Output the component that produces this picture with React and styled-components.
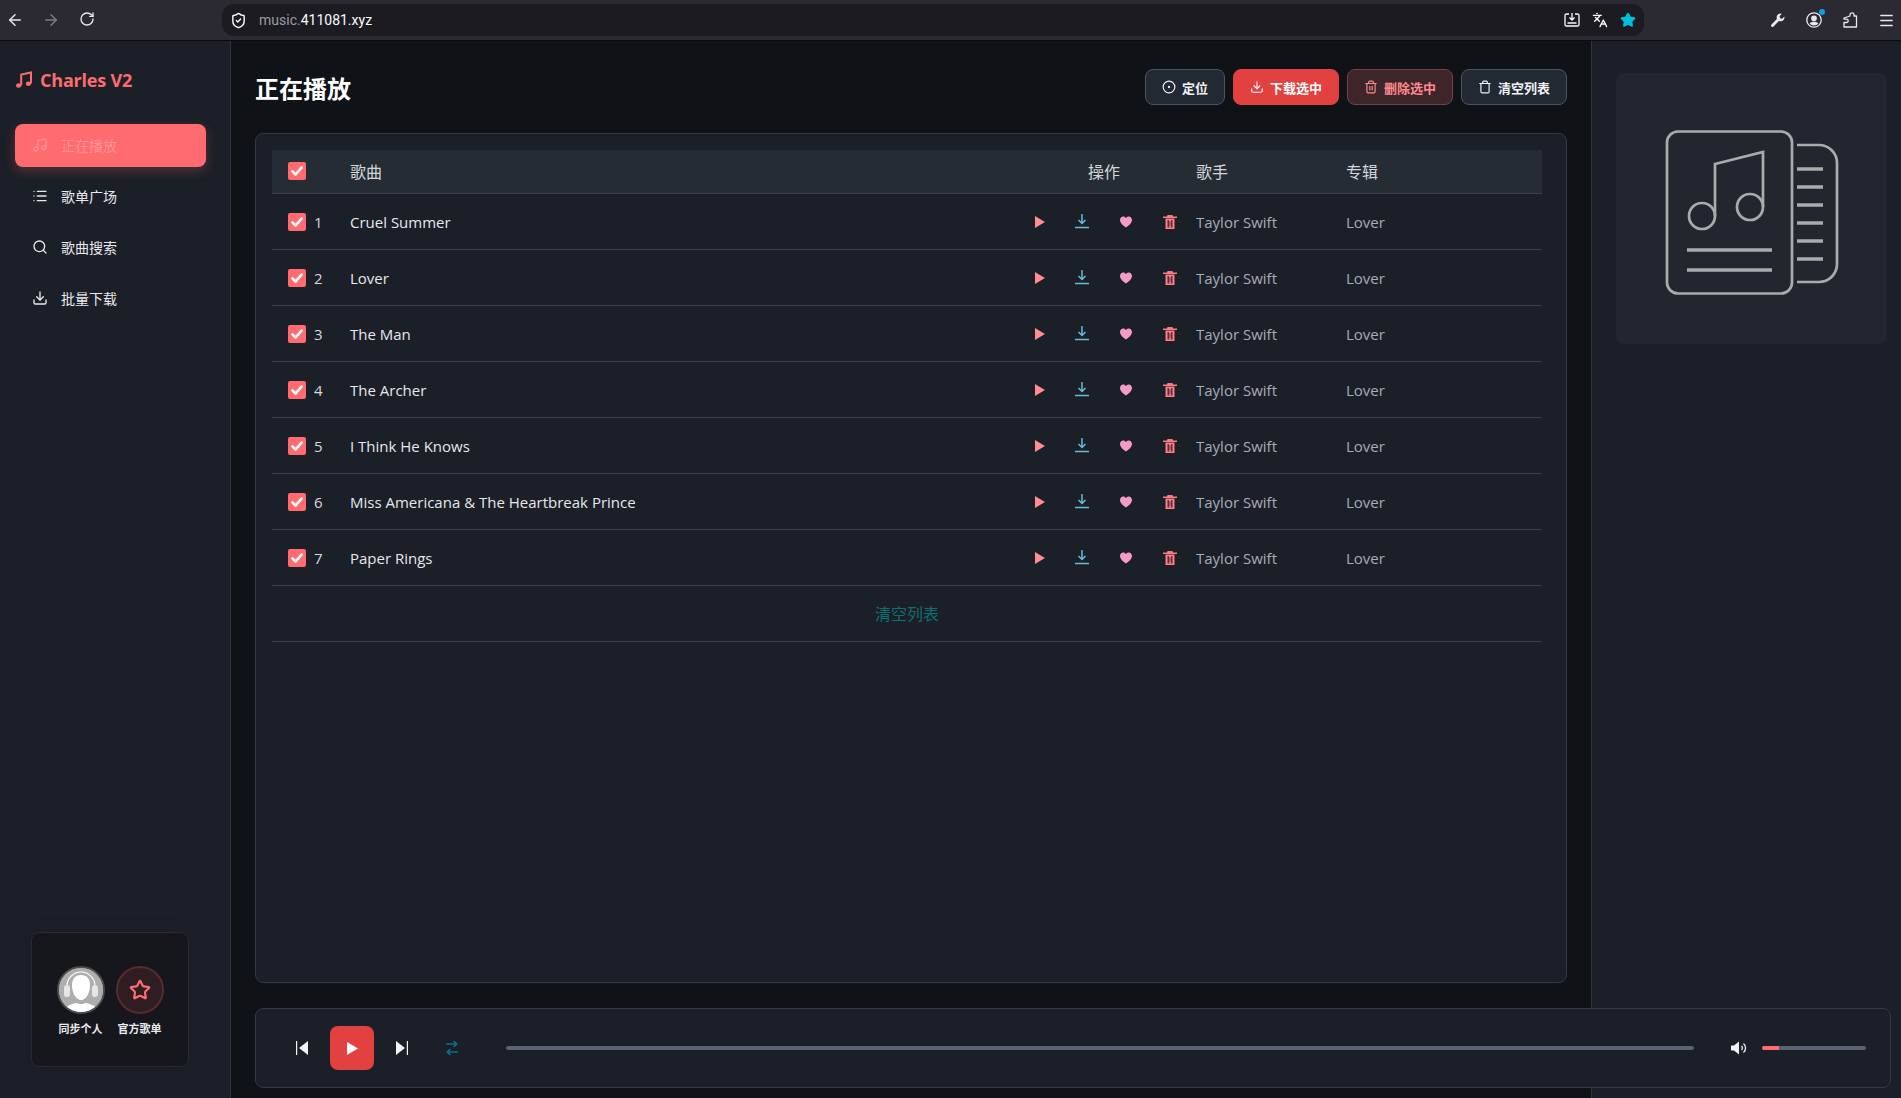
import React from 'react'
import styled, { createGlobalStyle } from 'styled-components'
import {
  ArrowLeft, ArrowRight, RotateCw, ShieldCheck, Languages, Star, Menu,
  Music, List, Search, Download, Trash2, Trash, CircleDot,
} from 'lucide-react'

const GlobalStyle = createGlobalStyle`
  html, body { margin: 0; padding: 0; background: #0f1216; }
  body { font-family: "Open Sans", "Noto Sans CJK SC", sans-serif; overflow: hidden; }
`
const FONT = `"Open Sans", "Noto Sans CJK SC", sans-serif`

const Page = styled.div`
  width: 1901px;
  height: 1098px;
  display: flex;
  flex-direction: column;
  overflow: hidden;
`
const BrowserBar = styled.header`
  height: 41px;
  box-sizing: border-box;
  flex: none;
  background: #2b2a33;
  border-bottom: 1px solid #0c0c0f;
  display: flex;
  align-items: center;
  color: #e8e8ec;
`
const NavButton = styled.span`
  width: 36px;
  display: flex;
  justify-content: center;
  color: ${p => (p.$dim ? '#7d7c84' : '#e8e8ec')};
`
const NavGroup = styled.div`
  display: flex;
  margin-left: -3px;
  width: 225px;
  flex: none;
`
const UrlBar = styled.div`
  width: 1422px;
  height: 32px;
  flex: none;
  background: #1c1b22;
  border-radius: 12px;
  display: flex;
  align-items: center;
  padding: 0 8px;
  box-sizing: border-box;
  gap: 12px;
  font-family: "Roboto", sans-serif;
  font-size: 14px;
  color: #fbfbfe;
`
const UrlText = styled.span`
  flex: 1;
  span { color: #9b9ba0; }
`
const UrlIcons = styled.div`
  display: flex;
  gap: 12px;
  align-items: center;
`
const ToolIcons = styled.div`
  flex: 1;
  display: flex;
  justify-content: flex-end;
  align-items: center;
  gap: 20px;
  padding-right: 6px;
`
const ProfileIcon = styled.span`
  position: relative;
  display: flex;
  &::after {
    content: '';
    position: absolute;
    top: -3px;
    right: -3px;
    width: 6px;
    height: 6px;
    border-radius: 50%;
    background: #0a9fe8;
  }
`
const Body = styled.div`
  flex: 1;
  min-height: 0;
  display: flex;
`
const Sidebar = styled.aside`
  width: 231px;
  box-sizing: border-box;
  flex: none;
  background: #1b1f27;
  border-right: 1px solid #2e3540;
  padding: 0 0 31px 15px;
  display: flex;
  flex-direction: column;
`
const Brand = styled.div`
  height: 83px;
  box-sizing: border-box;
  padding-bottom: 6px;
  display: flex;
  align-items: center;
  gap: 7px;
  color: #ff6b6f;
  font-size: 18px;
  letter-spacing: -0.2px;
  font-weight: 700;
  font-family: ${FONT};
`
const NavList = styled.nav`
  display: flex;
  flex-direction: column;
  gap: 8px;
  width: 191px;
`
const NavItem = styled.div`
  height: 43px;
  box-sizing: border-box;
  border-radius: 8px;
  display: flex;
  align-items: center;
  gap: 13px;
  padding: 0 0 2px 17px;
  font-size: 14px;
  color: ${p => (p.$active ? '#ff9294' : '#e8eaee')};
  background: ${p => (p.$active ? '#ff6b6f' : 'transparent')};
  box-shadow: ${p => (p.$active ? '0 4px 12px rgba(255,107,111,.25)' : 'none')};
`
const SyncCard = styled.div`
  margin-top: auto;
  margin-left: 16px;
  width: 158px;
  height: 135px;
  box-sizing: border-box;
  background: #16171c;
  border: 1px solid #262a31;
  border-radius: 8px;
  display: flex;
  justify-content: center;
  gap: 11px;
  padding-top: 33px;
  box-shadow: 0 0 20px rgba(0,0,0,.08);
`
const SyncItem = styled.div`
  display: flex;
  flex-direction: column;
  align-items: center;
  gap: 6px;
  width: 48px;
  font-size: 11px;
  font-weight: 600;
  color: #e8eaee;
  white-space: nowrap;
`
const RoundIcon = styled.div`
  width: 48px;
  height: 48px;
  flex: none;
  box-sizing: border-box;
  border-radius: 50%;
  overflow: hidden;
  display: flex;
  align-items: center;
  justify-content: center;
  border: 2px solid ${p => p.$border};
  background: ${p => p.$bg};
  color: #ff6b6f;
`
const Main = styled.main`
  flex: 1;
  min-width: 0;
  display: flex;
  flex-direction: column;
  padding: 28px 24px 10px;
  background: #0f1216;
  box-sizing: border-box;
`
const Head = styled.div`
  display: flex;
  align-items: center;
  justify-content: space-between;
  height: 36px;
  flex: none;
`
const Title = styled.h1`
  margin: 0;
  font-size: 24px;
  font-weight: 700;
  color: #fff;
`
const Actions = styled.div`
  display: flex;
  gap: 8px;
`
const Action = styled.button`
  height: 36px;
  width: ${p => p.$w}px;
  box-sizing: border-box;
  border-radius: 8px;
  display: flex;
  align-items: center;
  justify-content: center;
  gap: 6px;
  font-family: ${FONT};
  font-size: 13px;
  font-weight: 600;
  padding: 0;
  color: ${p => p.$color || '#f0f2f5'};
  background: ${p => p.$bg || '#232932'};
  border: 1px solid ${p => p.$border || '#4b5460'};
`
const Panel = styled.section`
  flex: 1;
  min-height: 0;
  margin-top: 28px;
  background: #1b1f27;
  border: 1px solid #323943;
  border-radius: 8px;
  padding: 16px 24px 0 16px;
  box-sizing: border-box;
`
const gridCols = `78px 1fr 108px 150px 196px`
const TableHead = styled.div`
  height: 44px;
  box-sizing: border-box;
  padding-bottom: 1px;
  display: grid;
  grid-template-columns: ${gridCols};
  align-items: center;
  background: #262c34;
  border-bottom: 1px solid #3b4049;
  font-size: 16px;
  color: #d3d7dd;
`
const Row = styled.div`
  height: 56px;
  box-sizing: border-box;
  display: grid;
  grid-template-columns: ${gridCols};
  align-items: center;
  border-bottom: 1px solid #3b4049;
  font-size: 15px;
  color: #e6e8eb;
`
const IndexCell = styled.div`
  display: flex;
  align-items: center;
  gap: 8px;
  padding-left: 16px;
  font-size: 15px;
  color: #d6d9de;
`
const Check = styled.span`
  width: 18px;
  height: 18px;
  flex: none;
  border-radius: 2px;
  background: #ff6b6f;
  display: flex;
  align-items: center;
  justify-content: center;
`
const Ops = styled.div`
  display: grid;
  grid-template-columns: repeat(4, 44px);
  justify-items: center;
  align-items: center;
  margin-left: -72px;
  width: 176px;
`
const PlayCell = styled.span`
  display: flex;
  margin-left: 3px;
`
const Muted = styled.div`
  color: #a6adb8;
`
const ClearRow = styled.div`
  height: 56px;
  box-sizing: border-box;
  padding-bottom: 2px;
  border-bottom: 1px solid #3b4049;
  display: flex;
  align-items: center;
  justify-content: center;
  color: #0e6f76;
  font-size: 16px;
`
const Player = styled.footer`
  height: 80px;
  flex: none;
  margin-top: 25px;
  margin-right: -324px;
  position: relative;
  z-index: 1;
  box-sizing: border-box;
  background: #1b1f27;
  border: 1px solid #323943;
  border-radius: 8px;
  display: flex;
  align-items: center;
  padding: 0 24px 0 40px;
`
const Ctl = styled.span`
  display: flex;
  margin-left: ${p => p.$ml || 0}px;
`
const PlayBtn = styled.span`
  width: 44px;
  height: 44px;
  border-radius: 8px;
  background: #e34040;
  display: flex;
  align-items: center;
  justify-content: center;
  margin: 0 22px 0 22px;
`
const Bar = styled.div`
  height: 4px;
  border-radius: 2px;
  background: #59626e;
  flex: ${p => (p.$w ? 'none' : 1)};
  width: ${p => (p.$w ? `${p.$w}px` : 'auto')};
  overflow: hidden;
`
const Fill = styled.div`
  height: 100%;
  background: #ff6b6f;
`
const Right = styled.aside`
  width: 310px;
  flex: none;
  background: #1b1f27;
  border-left: 1px solid #2e3540;
  padding: 32px 14px 0 24px;
  box-sizing: border-box;
`
const Cover = styled.div`
  width: 271px;
  height: 271px;
  box-sizing: border-box;
  padding-top: 7px;
  border-radius: 8px;
  background: #22272f;
  display: flex;
  align-items: center;
  justify-content: center;
`
const Seek = styled.div`
  flex: 1;
  display: flex;
  padding: 0 37px 0 48px;
`
const Volume = styled.div`
  display: flex;
  align-items: center;
  gap: 14px;
`

const songs = ['Cruel Summer', 'Lover', 'The Man', 'The Archer', 'I Think He Knows', 'Miss Americana & The Heartbreak Prince', 'Paper Rings']

const Tick = () => (
  <svg width="14" height="14" viewBox="0 0 14 14" fill="none" stroke="#fff" strokeWidth="2.6" strokeLinecap="round" strokeLinejoin="round">
    <path d="M2.5 7.4 5.6 10.500 11.500 3.600" />
  </svg>
)
const BrandNote = () => (
  <svg width="18" height="18" viewBox="0 0 18 18" fill="none" stroke="currentColor" strokeWidth="2">
    <path d="M6.200 14.500V3.500L16 1.500v11" />
    <ellipse cx="3.600" cy="14.500" rx="2.600" ry="2.200" fill="currentColor" stroke="none" />
    <ellipse cx="13.400" cy="12.800" rx="2.600" ry="2.200" fill="currentColor" stroke="none" />
  </svg>
)
const InstallIcon = () => (
  <svg width="16" height="16" viewBox="0 0 16 16" fill="none" stroke="currentColor" strokeWidth="1.300">
    <path d="M5 2H2.500A1.500 1.500 0 0 0 1 3.500v9A1.500 1.500 0 0 0 2.500 14h11a1.500 1.500 0 0 0 1.500-1.500v-9A1.500 1.500 0 0 0 13.500 2H11" />
    <path d="M8 1v6.500M5.500 5.500 8 8l2.500-2.500M3.500 11h9" />
  </svg>
)
const WrenchIcon = () => (
  <svg width="16" height="16" viewBox="0 0 16 16" fill="currentColor">
    <path d="M10.500 1.500a4 4 0 0 0-3.600 5.500L1.500 12.400a1.400 1.400 0 0 0 2 2L8.900 9a4 4 0 0 0 5.600-3.600l-.1-.9-2.300 2.300-2-.5-.5-2 2.200-2.500z" />
  </svg>
)
const AccountIcon = () => (
  <svg width="16" height="16" viewBox="0 0 16 16" fill="none" stroke="currentColor" strokeWidth="1.300">
    <circle cx="8" cy="8" r="7.200" />
    <circle cx="8" cy="6.300" r="2.200" fill="currentColor" />
    <path d="M3.500 11.500c1-1.300 2.700-1.800 4.500-1.800s3.500.5 4.500 1.800a6 6 0 0 1-9 0z" fill="currentColor" stroke="none" />
  </svg>
)
const PuzzleIcon = () => (
  <svg width="16" height="16" viewBox="0 0 16 16" fill="none" stroke="currentColor" strokeWidth="1.300" strokeLinejoin="round">
    <path d="M8 4V2.800a2 2 0 0 1 4 0V4h2.500v11H2v-4.500h2.500a1.700 1.700 0 0 0 0-3.400H2V6z" />
  </svg>
)
const RowPlay = () => (
  <svg width="10" height="12" viewBox="0 0 10 12" fill="#ff8f8f"><path d="M0 0 10 6 0 12z" /></svg>
)
const RowDownload = () => (
  <svg width="14" height="15" viewBox="0 0 14 15" fill="none" stroke="#67bcd8" strokeWidth="1.500">
    <path d="M7 0v9M3.500 6 7 9.500 10.500 6M0 13.500h14" />
  </svg>
)
const RowHeart = () => (
  <svg width="12" height="12" viewBox="0 0 13 12" fill="#f49ac6">
    <path d="M6.500 12C3 9.200 0 7 0 3.700 0 1.500 1.600 0 3.500 0c1.300 0 2.400.7 3 1.800C7.100.7 8.200 0 9.500 0 11.400 0 13 1.500 13 3.700 13 7 10 9.200 6.500 12z" />
  </svg>
)
const RowTrash = () => (
  <svg width="14" height="14" viewBox="0 0 14 14">
    <path d="M4.500 0h5l.5 1.500H14V3H0V1.500h4z" fill="#ff7d85" />
    <path d="M2.500 3.500h9V14h-9z" fill="#ff7d85" />
    <path d="M4.500 5h5v7.500h-5z" fill="#5c2f36" />
    <path d="M5.800 5h2.400L7.500 7.200v3.100L8.200 12.500H5.800l.7-2.200V7.200z" fill="#ff7d85" />
  </svg>
)
const PrevIcon = () => (
  <svg width="12" height="14" viewBox="0 0 12 14" fill="#f0f2f5"><path d="M0 0h1.200v14H0zM12 0v14L3 7z" /></svg>
)
const NextIcon = () => (
  <svg width="12" height="14" viewBox="0 0 12 14" fill="#f0f2f5"><path d="M12 0h-1.200v14H12zM0 0v14l9-7z" /></svg>
)
const BigPlay = () => (
  <svg width="11" height="13" viewBox="0 0 11 13" fill="#fff"><path d="M0 0 11 6.500 0 13z" /></svg>
)
const LoopIcon = () => (
  <svg width="12" height="16" viewBox="0 0 12 16" fill="none" stroke="#0f6d8c" strokeWidth="1.700">
    <path d="M0 4h10.500M7.500 1l3.200 3-3.200 3M12 12H1.500M4.500 9l-3.200 3 3.200 3" />
  </svg>
)
const SpeakerIcon = () => (
  <svg width="17" height="14" viewBox="0 0 17 14" fill="none" stroke="#f0f2f5" strokeWidth="1.300">
    <path d="M0 4.500h3L8 .5v13l-5-4H0z" fill="#f0f2f5" stroke="none" />
    <path d="M10.500 5a2.800 2.800 0 0 1 0 4M12.500 2.500a6 6 0 0 1 0 9" />
  </svg>
)
const Avatar = () => (
  <svg width="44" height="44" viewBox="0 0 44 44">
    <rect width="44" height="44" fill="#aeaeae" />
    <path d="M8 24v-6a14 14 0 0 1 28 0v6" fill="none" stroke="#fff" strokeWidth="1.200" />
    <rect x="5" y="17" width="6" height="12" rx="3" fill="#e6e6e6" />
    <rect x="33" y="17" width="6" height="12" rx="3" fill="#e6e6e6" />
    <path d="M22 7c6 0 9 4 9 10 0 8-4 15-9 15s-9-7-9-15c0-6 3-10 9-10z" fill="#fff" />
    <path d="M4 44c1-6 9-8 13-9 3 1.500 7 1.500 10 0 4 1 12 3 13 9z" fill="#fff" />
  </svg>
)
const CoverArt = () => (
  <svg width="174" height="165" viewBox="0 0 174 165" fill="none" stroke="#a9abad" strokeWidth="2.700">
    <rect x="2" y="1.500" width="125" height="162" rx="11" />
    <path d="M132 15h22a18 18 0 0 1 18 18v101a18 18 0 0 1-18 18h-22" />
    <path d="M132 39h26M132 57h26M132 75h26M132 93h26M132 111h26M132 129h26" strokeWidth="3.400" />
    <path d="M22 120h85M22 140h85" strokeWidth="3.400" />
    <circle cx="37" cy="86" r="13" />
    <circle cx="85" cy="77" r="13" />
    <path d="M50 86V34l48-12v55" />
  </svg>
)

export default function App() {
  return (
    <Page>
      <GlobalStyle />
      <BrowserBar>
        <NavGroup>
          <NavButton><ArrowLeft size={18} /></NavButton>
          <NavButton $dim><ArrowRight size={18} /></NavButton>
          <NavButton><RotateCw size={16} /></NavButton>
        </NavGroup>
        <UrlBar>
          <ShieldCheck size={17} />
          <UrlText><span>music.</span>411081.xyz</UrlText>
          <UrlIcons>
            <InstallIcon />
            <Languages size={16} />
            <Star size={16} fill="#00bfdc" color="#00bfdc" />
          </UrlIcons>
        </UrlBar>
        <ToolIcons>
          <WrenchIcon />
          <ProfileIcon><AccountIcon /></ProfileIcon>
          <PuzzleIcon />
          <Menu size={17} />
        </ToolIcons>
      </BrowserBar>
      <Body>
        <Sidebar>
          <Brand><BrandNote />Charles V2</Brand>
          <NavList>
            <NavItem $active><Music size={16} />正在播放</NavItem>
            <NavItem><List size={16} />歌单广场</NavItem>
            <NavItem><Search size={16} />歌曲搜索</NavItem>
            <NavItem><Download size={16} />批量下载</NavItem>
          </NavList>
          <SyncCard>
            <SyncItem>
              <RoundIcon $border="#4b4c50" $bg="#aeaeae"><Avatar /></RoundIcon>
              同步个人
            </SyncItem>
            <SyncItem>
              <RoundIcon $border="#5a2a2e" $bg="#2e1d21"><Star size={22} strokeWidth={2.4} /></RoundIcon>
              官方歌单
            </SyncItem>
          </SyncCard>
        </Sidebar>
        <Main>
          <Head>
            <Title>正在播放</Title>
            <Actions>
              <Action $w={80}><CircleDot size={14} />定位</Action>
              <Action $w={106} $bg="#e34040" $border="#e34040" $color="#fff"><Download size={14} />下载选中</Action>
              <Action $w={106} $bg="#3d252a" $border="#7c3f47" $color="#ff8b90"><Trash2 size={14} />删除选中</Action>
              <Action $w={106}><Trash size={14} />清空列表</Action>
            </Actions>
          </Head>
          <Panel>
            <TableHead>
              <IndexCell><Check><Tick /></Check></IndexCell>
              <div>歌曲</div>
              <div>操作</div>
              <div>歌手</div>
              <div>专辑</div>
            </TableHead>
            {songs.map((s, i) => (
              <Row key={s}>
                <IndexCell><Check><Tick /></Check>{i + 1}</IndexCell>
                <div>{s}</div>
                <Ops>
                  <PlayCell><RowPlay /></PlayCell>
                  <RowDownload />
                  <RowHeart />
                  <RowTrash />
                </Ops>
                <Muted>Taylor Swift</Muted>
                <Muted>Lover</Muted>
              </Row>
            ))}
            <ClearRow>清空列表</ClearRow>
          </Panel>
          <Player>
            <Ctl><PrevIcon /></Ctl>
            <PlayBtn><BigPlay /></PlayBtn>
            <Ctl><NextIcon /></Ctl>
            <Ctl $ml={38}><LoopIcon /></Ctl>
            <Seek><Bar /></Seek>
            <Volume>
              <SpeakerIcon />
              <Bar $w={104}><Fill style={{ width: '16%' }} /></Bar>
            </Volume>
          </Player>
        </Main>
        <Right>
          <Cover><CoverArt /></Cover>
        </Right>
      </Body>
    </Page>
  )
}
